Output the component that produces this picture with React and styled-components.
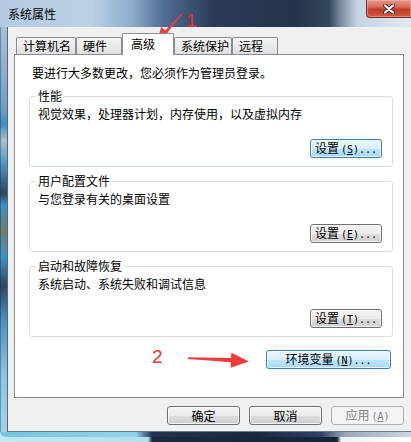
import React from 'react';
import styled, { createGlobalStyle } from 'styled-components';

const GlobalStyle = createGlobalStyle`
  html, body {
    margin: 0;
    padding: 0;
    background: #16243a;
  }
  body {
    font-family: "Noto Sans CJK SC", "Liberation Sans", sans-serif;
    font-size: 12px;
    color: #000;
  }
`;

const Screen = styled.div`
  position: relative;
  width: 411px;
  height: 442px;
  overflow: hidden;
  background: linear-gradient(
    to right,
    #c4e8f2 0%,
    #b2dfee 36%,
    #1a2a42 37%,
    #16243a 82%,
    #eef2f5 83%,
    #ffffff 100%
  );
`;

const Window = styled.div`
  display: flex;
  flex-direction: column;
  width: 411px;
  height: 437px;
  border-bottom-left-radius: 6px;
  overflow: hidden;
`;

const TitleBar = styled.div`
  height: 27px;
  flex: none;
  display: flex;
  align-items: flex-start;
  justify-content: space-between;
  background: linear-gradient(
    to right,
    #b3cae2 0%,
    #bcd1e6 22%,
    #8eaccb 32%,
    #4f6c92 40%,
    #2b3b56 52%,
    #24334b 72%,
    #34465f 80%,
    #7d8ea4 83%,
    #c6d4e2 87%,
    #dfe8f1 100%
  );
`;

const Title = styled.div`
  padding: 7px 0 0 8px;
  line-height: 14px;
  font-size: 12px;
  color: #000;
`;

const CloseButton = styled.div`
  width: 44px;
  height: 17px;
  display: flex;
  align-items: center;
  justify-content: center;
  border-left: 1px solid #6e2a22;
  border-bottom: 1px solid #6e2a22;
  border-bottom-left-radius: 4px;
  background: linear-gradient(#e49a88 0%, #d86a55 40%, #c23c27 55%, #d05a3c 100%);
  box-shadow: inset 0 0 0 1px rgba(255, 200, 190, 0.45);
`;

const Body = styled.div`
  flex: 1;
  display: flex;
`;

const SideFrame = styled.div`
  width: 7px;
  flex: none;
  box-shadow: inset 1px 0 0 rgba(20, 40, 60, 0.35);
  background: linear-gradient(
    #a9c1d8 0%,
    #93b4d1 8%,
    #6f9fc6 20%,
    #3f8fbf 24%,
    #a8c2cf 28%,
    #4c93c0 34%,
    #2d4660 41%,
    #3d91c3 44%,
    #6f7e74 50%,
    #3f92c4 57%,
    #2f455e 64%,
    #4a8fbf 72%,
    #8cc6e2 86%,
    #9fd3ea 100%
  );
`;

const Client = styled.div`
  flex: 1;
  display: flex;
  flex-direction: column;
  background: #f0f0f0;
  border-left: 1px solid #5d6670;
  border-bottom: 1px solid #6f7a86;
  padding: 6px 7px 0 6px;
`;

const BottomFrame = styled.div`
  height: 5px;
  flex: none;
  background: linear-gradient(
    to right,
    #74c4e2 0%,
    #92d4ea 33%,
    #22334d 37%,
    #1a2940 62%,
    #2e4261 78%,
    #9aa9bb 84%,
    #c9d5e1 100%
  );
`;

const TabRow = styled.div`
  height: 21px;
  margin-left: 2px;
  display: flex;
  align-items: flex-end;
  position: relative;
  z-index: 1;
`;

const Tab = styled.div`
  box-sizing: border-box;
  width: ${(p) => p.w}px;
  height: ${(p) => (p.active ? 22 : 17)}px;
  margin-bottom: ${(p) => (p.active ? -1 : 0)}px;
  padding: ${(p) => (p.active ? '2px 0 0 8px' : '0 0 0 6px')};
  line-height: 16px;
  border: 1px solid #898c95;
  border-bottom: none;
  border-radius: 2px 2px 0 0;
  background: ${(p) => (p.active ? '#ffffff' : 'linear-gradient(#f4f4f4 0%, #ebebeb 50%, #dedede 100%)')};
  white-space: nowrap;
`;

const Panel = styled.div`
  box-sizing: border-box;
  height: 344px;
  display: flex;
  flex-direction: column;
  border: 1px solid #898c95;
  background: #ffffff;
  padding: 10px 10px 0 14px;
`;

const Intro = styled.div`
  margin-left: 3px;
  line-height: 16px;
`;

const Group = styled.div`
  position: relative;
  box-sizing: border-box;
  height: 71px;
  margin-top: ${(p) => p.top}px;
  display: flex;
  flex-direction: column;
  justify-content: space-between;
  align-items: flex-start;
  border: 1px solid #d5dfe5;
  border-radius: 3px;
  padding: 9px 10px 8px 8px;
`;

const Legend = styled.span`
  position: absolute;
  top: -8px;
  left: 6px;
  padding: 0 2px;
  line-height: 14px;
  background: #ffffff;
`;

const Desc = styled.div`
  line-height: 16px;
`;

const Button = styled.div`
  box-sizing: border-box;
  width: ${(p) => p.w || 73}px;
  height: 19px;
  align-self: flex-end;
  margin-right: ${(p) => p.mr || 0}px;
  margin-top: ${(p) => p.mt || 0}px;
  display: flex;
  align-items: center;
  justify-content: center;
  line-height: 17px;
  border-radius: 3px;
  white-space: nowrap;
  border: 1px solid ${(p) => (p.primary ? '#3c7fb1' : p.disabled ? '#adb2b5' : '#707070')};
  color: ${(p) => (p.disabled ? '#838383' : '#000')};
  background: ${(p) =>
    p.primary
      ? 'linear-gradient(#eaf6fd 0%, #d9f0fc 50%, #bee6fd 51%, #a7d9f5 100%)'
      : p.disabled
      ? '#f4f4f4'
      : 'linear-gradient(#f2f2f2 0%, #ebebeb 50%, #dddddd 51%, #cfcfcf 100%)'};
  box-shadow: ${(p) => (p.disabled ? 'none' : 'inset 0 0 0 1px rgba(255, 255, 255, 0.7)')};
`;

const Key = styled.span`
  font-family: "DejaVu Sans Mono", "Liberation Mono", monospace;
  font-size: 10px;
  margin-left: 2px;
`;

const Footer = styled.div`
  margin-top: 8px;
  display: flex;
  justify-content: flex-end;
  gap: 9px;
`;

const Overlay = styled.svg`
  position: absolute;
  left: 0;
  top: 0;
  pointer-events: none;
`;

const Mark = styled.text`
  font-family: "Liberation Sans", Arial, sans-serif;
  font-size: 19px;
  fill: #e8322f;
`;

function Label({ text, k, more = true }) {
  return (
    <span>
      {text}
      {k && (
        <Key>
          (<u>{k}</u>){more ? '...' : ''}
        </Key>
      )}
    </span>
  );
}

export default function App() {
  return (
    <Screen>
      <GlobalStyle />
      <Window>
        <TitleBar>
          <Title>系统属性</Title>
          <CloseButton>
            <svg width="12" height="10" viewBox="0 0 12 10">
              <path d="M2 1.5 L10 8.5 M10 1.5 L2 8.5" stroke="#3a2a2a" strokeWidth="4" strokeLinecap="round" />
              <path d="M2 1.5 L10 8.5 M10 1.5 L2 8.5" stroke="#ffffff" strokeWidth="2.2" strokeLinecap="round" />
            </svg>
          </CloseButton>
        </TitleBar>
        <Body>
          <SideFrame />
          <Client>
            <TabRow>
              <Tab w={60}>计算机名</Tab>
              <Tab w={46}>硬件</Tab>
              <Tab w={52} active>高级</Tab>
              <Tab w={58}>系统保护</Tab>
              <Tab w={46}>远程</Tab>
            </TabRow>
            <Panel>
              <Intro>要进行大多数更改，您必须作为管理员登录。</Intro>
              <Group top={15}>
                <Legend>性能</Legend>
                <Desc>视觉效果，处理器计划，内存使用，以及虚拟内存</Desc>
                <Button w={72} primary>
                  <Label text="设置" k="S" />
                </Button>
              </Group>
              <Group top={14}>
                <Legend>用户配置文件</Legend>
                <Desc>与您登录有关的桌面设置</Desc>
                <Button w={72}>
                  <Label text="设置" k="E" />
                </Button>
              </Group>
              <Group top={14}>
                <Legend>启动和故障恢复</Legend>
                <Desc>系统启动、系统失败和调试信息</Desc>
                <Button w={72}>
                  <Label text="设置" k="T" />
                </Button>
              </Group>
              <Button w={125} mr={2} mt={13} primary>
                <Label text="环境变量" k="N" />
              </Button>
            </Panel>
            <Footer>
              <Button>确定</Button>
              <Button>取消</Button>
              <Button disabled>
                <Label text="应用" k="A" more={false} />
              </Button>
            </Footer>
          </Client>
        </Body>
        <BottomFrame />
      </Window>
      <Overlay width="411" height="442" viewBox="0 0 411 442">
        <polygon
          points="182.6,12.7 165.2,30.6 161.1,27.0 157,42 171.5,36.2 167.4,32.6 183.4,13.3"
          fill="#ee3b3b"
        />
        <Mark x="186" y="27">1</Mark>
        <polygon
          points="188,357.2 231,358.1 231.4,352.8 249,361.4 230.6,367.8 230.9,362.3 188,358.9"
          fill="#ee3b3b"
        />
        <Mark x="152" y="363">2</Mark>
      </Overlay>
    </Screen>
  );
}
